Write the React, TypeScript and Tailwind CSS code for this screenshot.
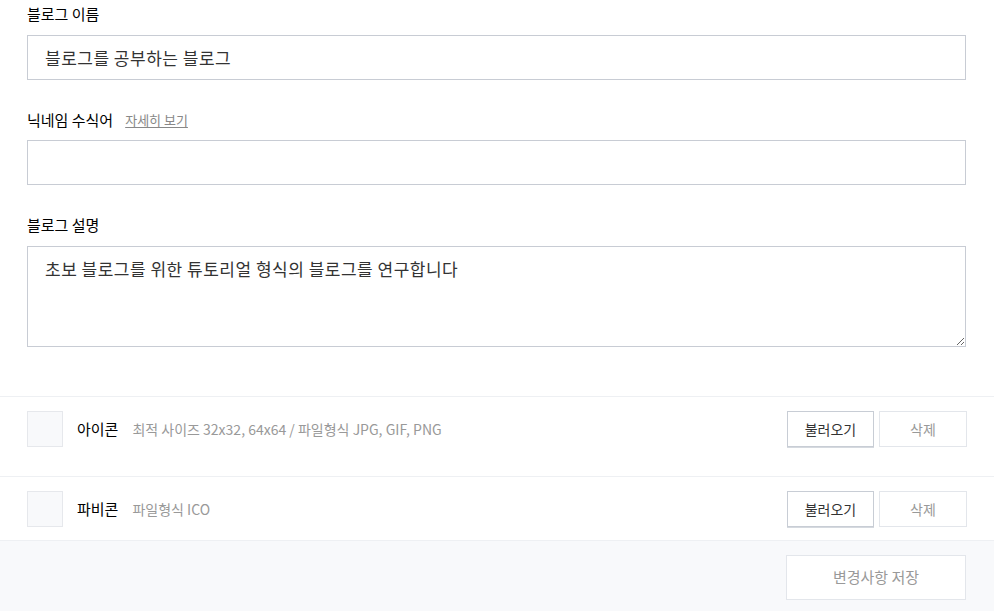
import { useState } from "react"

function UploadRow({
  label,
  desc,
  className,
}: {
  label: string
  desc: string
  className: string
}) {
  return (
    <div className={`flex items-start border-t border-[#eef0f3] px-[27px] pt-[14px] ${className}`}>
      <div className="h-[36px] w-[36px] shrink-0 border border-[#e6e8ec] bg-[#f8f9fb]" />
      <div className="ml-[14px] flex h-[36px] items-center">
        <span className="text-[15px] text-[#000]">{label}</span>
        <span className="ml-[14px] text-[14px] text-[#999]">{desc}</span>
      </div>
      <div className="ml-auto flex gap-[5px]">
        <button className="h-[36px] w-[87px] border border-[#c8cdd5] bg-white text-[14px] text-[#333] shadow-[0_1px_0_#d5d9df]">
          불러오기
        </button>
        <button className="h-[36px] w-[88px] border border-[#e3e6eb] bg-white text-[14px] text-[#999]">
          삭제
        </button>
      </div>
    </div>
  )
}

export default function App() {
  const [name, setName] = useState("블로그를 공부하는 블로그")
  const [nick, setNick] = useState("")
  const [desc, setDesc] = useState("초보 블로그를 위한 튜토리얼 형식의 블로그를 연구합니다")

  return (
    <div
      className="min-h-screen bg-white text-[#333]"
      style={{ fontFamily: '"Noto Sans CJK KR", "Noto Sans", sans-serif' }}
    >
      <div className="px-[27px] pr-[28px] pt-[4px]">
        <label className="block">
          <span className="block h-[20px] text-[15px] leading-[20px] text-[#000]">블로그 이름</span>
          <input
            value={name}
            onChange={(e) => setName(e.target.value)}
            className="mt-[11px] block h-[45px] w-full border border-[#c8ccd4] px-[17px] text-[17px] tracking-[0.5px] text-[#333] outline-none"
          />
        </label>

        <div className="mt-[30px]">
          <div className="flex h-[20px] items-center">
            <span className="text-[15px] text-[#000]">닉네임 수식어</span>
            <a href="#" className="ml-[12px] text-[13px] text-[#888] underline underline-offset-2">
              자세히 보기
            </a>
          </div>
          <input
            value={nick}
            onChange={(e) => setNick(e.target.value)}
            className="mt-[10px] block h-[45px] w-full border border-[#c8ccd4] px-[17px] text-[17px] tracking-[0.5px] text-[#333] outline-none"
          />
        </div>

        <label className="mt-[30px] block">
          <span className="block h-[20px] text-[15px] leading-[20px] text-[#000]">블로그 설명</span>
          <textarea
            value={desc}
            onChange={(e) => setDesc(e.target.value)}
            className="mt-[11px] block h-[101px] w-full border border-[#c8ccd4] px-[17px] py-[10px] text-[17px] leading-[24px] tracking-[0.5px] text-[#333] outline-none"
          />
        </label>
      </div>

      <div className="mt-[49px]">
        <UploadRow label="아이콘" desc="최적 사이즈 32x32, 64x64 / 파일형식 JPG, GIF, PNG" className="pb-[29px]" />
        <UploadRow label="파비콘" desc="파일형식 ICO" className="pb-[13px]" />
      </div>

      <div className="flex justify-end border-t border-[#eef0f3] bg-[#f8f9fb] px-[28px] pt-[14px] pb-[12px]">
        <button className="h-[45px] w-[180px] border border-[#e3e6eb] bg-white text-[15px] text-[#999]">
          변경사항 저장
        </button>
      </div>
    </div>
  )
}
